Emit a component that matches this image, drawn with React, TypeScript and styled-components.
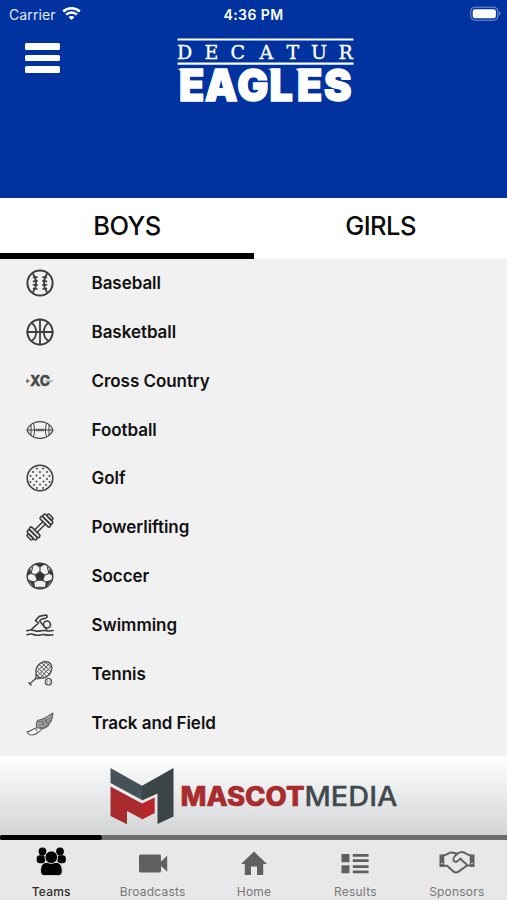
import React from "react";
import styled, { createGlobalStyle } from "styled-components";

const GlobalStyle = createGlobalStyle`
  *, *::before, *::after { box-sizing: border-box; }
  body { margin: 0; background: #f1f1f1; }
`;

const Screen = styled.div`
  width: 507px;
  height: 900px;
  display: flex;
  flex-direction: column;
  overflow: hidden;
  background: #f1f1f1;
  color: #111;
  font-family: Inter, "Liberation Sans", sans-serif;
`;

const Header = styled.header`
  height: 198px;
  flex: none;
  background: #0033a0;
  color: #fff;
`;

const StatusBar = styled.div`
  height: 28px;
  display: grid;
  grid-template-columns: 1fr 1fr 1fr;
  align-items: center;
  padding: 0 6px 0 9px;
`;

const Carrier = styled.div`
  display: flex;
  align-items: center;
  gap: 6px;
  color: #e4ebfb;
  font-size: 14px;
  letter-spacing: 0.1px;
`;

const Clock = styled.div`
  justify-self: center;
  margin-right: 3px;
  font-weight: 600;
  font-size: 14px;
  letter-spacing: 0.4px;
  white-space: nowrap;
`;

const Battery = styled.svg`
  justify-self: end;
  display: block;
`;

const TitleBar = styled.div`
  display: grid;
  grid-template-columns: 177px 1fr;
  padding-top: 8px;
`;

const MenuButton = styled.button`
  display: flex;
  flex-direction: column;
  gap: 5px;
  width: 35px;
  margin: 7px 0 0 25px;
  padding: 0;
  border: 0;
  background: none;
`;

const MenuLine = styled.span`
  height: 6.6px;
  border-radius: 1.5px;
  background: #fff;
`;

const Logo = styled.svg`
  display: block;
  overflow: visible;
`;

const Tabs = styled.div`
  display: grid;
  grid-template-columns: 254px 1fr;
  height: 61px;
  flex: none;
  background: #fff;
`;

const Tab = styled.button<{ $active?: boolean }>`
  border: 0;
  border-bottom: 6px solid ${(p) => (p.$active ? "#000" : "#fff")};
  padding: 0;
  background: #fff;
  color: #0a0a0a;
  font: 500 25.5px/55px Inter, sans-serif;
  letter-spacing: -0.55px;
`;

const TeamList = styled.ul`
  list-style: none;
  margin: 0;
  padding: 0;
  height: 497px;
  flex: none;
`;

const TeamRow = styled.li`
  height: 48.85px;
  display: flex;
  align-items: center;
  padding: 0 0 0.8px 25px;
  gap: 36.5px;
`;

const TeamIcon = styled.svg`
  width: 30px;
  height: 30px;
  flex: none;
  fill: none;
  stroke: #3d3d3d;
  stroke-width: 2;
  stroke-linecap: round;
  stroke-linejoin: round;
`;

const TeamName = styled.span`
  font-size: 17px;
  font-weight: 600;
  letter-spacing: -0.05px;
  white-space: nowrap;
`;

const Banner = styled.div`
  height: 79px;
  flex: none;
  padding: 11px 0 0 109px;
  background: linear-gradient(#fff, #d2d4d6);
`;

const Progress = styled.div`
  height: 5px;
  flex: none;
  background: #6c6c6c;
`;

const ProgressFill = styled.div`
  width: 102px;
  height: 5px;
  border-radius: 2.5px;
  background: #000;
`;

const NavBar = styled.nav`
  height: 60px;
  flex: none;
  display: grid;
  grid-template-columns: repeat(5, 1fr);
  background: #e8e8e8;
`;

const NavItem = styled.a<{ $active?: boolean }>`
  display: flex;
  flex-direction: column;
  align-items: center;
  padding: 5px 0 0 1px;
  color: ${(p) => (p.$active ? "#000" : "#606060")};
`;

const NavIcon = styled.svg`
  width: 36px;
  height: 34px;
  fill: currentColor;
`;

const NavLabel = styled.span<{ $active?: boolean }>`
  margin-top: 5px;
  font-size: 12px;
  line-height: 16px;
  letter-spacing: 0.2px;
  font-weight: ${(p) => (p.$active ? 500 : 400)};
  color: ${(p) => (p.$active ? "#2c2c2c" : "#777")};
`;

const golfDots = [
  [12, 5.5], [18, 5.5],
  [8, 9], [15, 9], [22, 9],
  [5.5, 13], [11.5, 12.5], [18.5, 12.5], [24.5, 13],
  [8, 16], [15, 15], [22, 16],
  [5.5, 19], [11.5, 18.5], [18.5, 18.5], [24.5, 19],
  [9, 22], [15, 21.5], [21, 22],
  [12, 25], [18, 25],
];

const Baseball = () => (
  <>
    <circle cx="15" cy="15" r="12.6" />
    <path d="M8 6c4 5 4 13 0 18M22 6c-4 5-4 13 0 18" strokeWidth="1.800" />
    <path
      d="M8.500 9.500l3.600-.5M8.500 13.300l3.600-.5M8.500 16.700l3.600.5M8.500 20.500l3.600.5M21.500 9.500l-3.600-.5M21.500 13.300l-3.600-.5M21.500 16.700l-3.600.5M21.500 20.500l-3.600.5"
      strokeWidth="1.700"
    />
  </>
);

const Basketball = () => (
  <>
    <circle cx="15" cy="15" r="12.6" />
    <path d="M15 2.4v25.2M2.4 15h25.2M6.5 6c6.2 4 6.2 14 0 18M23.5 6c-6.2 4-6.2 14 0 18" strokeWidth="1.8" />
  </>
);

const CrossCountry = () => (
  <>
    <text
      x="5" y="20.300" textLength="20" lengthAdjust="spacingAndGlyphs"
      fill="#484848" stroke="#484848" strokeWidth=".3" fontFamily="Inter, sans-serif" fontSize="14.500" fontWeight="800"
    >
      XC
    </text>
    <path d="M2 13.500l2.500 1.500-2.500 1.500zM21 15h6.500" fill="#666" stroke="#666" strokeWidth=".8" />
  </>
);

const Football = () => (
  <>
    <path d="M2 15C6 3.8 24 3.8 28 15C24 26.2 6 26.2 2 15z" strokeWidth="1.2" />
    <path d="M6 10v10M8.5 8.5c1.5 4 1.5 9 0 13M24 10v10M21.500 8.500c-1.500 4-1.500 9 0 13M3 15h24" strokeWidth="1" />
    <path d="M11 15h8M12 14v2M14 14v2M16 14v2M18 14v2" strokeWidth=".8" />
  </>
);

const Golf = () => (
  <>
    <circle cx="15" cy="15" r="12.8" strokeWidth="1.6" />
    {golfDots.map(([x, y]) => (
      <circle key={`${x}-${y}`} cx={x} cy={y} r=".95" fill="#3d3d3d" stroke="none" />
    ))}
  </>
);

const Powerlifting = () => (
  <g transform="rotate(-45 15 15)" strokeWidth="1.600">
    <path d="M9 13.300h12M9 16.700h12" />
    <rect x="5.700" y="8.300" width="3.500" height="13.400" rx="1.700" />
    <rect x="2.200" y="8.800" width="3.500" height="12.400" rx="1.700" />
    <rect x="-.600" y="11.500" width="2.800" height="7" rx="1.400" />
    <rect x="20.800" y="8.300" width="3.500" height="13.400" rx="1.700" />
    <rect x="24.300" y="8.800" width="3.500" height="12.400" rx="1.700" />
    <rect x="27.800" y="11.500" width="2.800" height="7" rx="1.400" />
  </g>
);

const Soccer = () => (
  <>
    <circle cx="15" cy="15" r="12.800" strokeWidth="1.400" />
    <g fill="#333" strokeWidth=".8">
      <path d="M15 10.600l4.700 3.400-1.800 5.400h-5.800L10.300 14z" />
      <path d="M10.600 3.300Q15 1 19.400 3.300L15 5.900z" />
      <path d="M25.600 8l2.200 6.500-3.800-2.200z" />
      <path d="M4.400 8L2.200 14.500 6 12.300z" />
      <path d="M25.300 20.500l-4.900 5.700.8-5z" />
      <path d="M4.700 20.500l4.900 5.700-.8-5z" />
    </g>
    <path d="M15 6v5M19.700 14l4.300-1.700M17.900 19.400l3.300 1.800M12.100 19.400l-3.300 1.800M10.300 14L6 12.300M6 12.300l1.600-6M24 12.300l-1.600-6M8.800 21.200l-5-2M21.200 21.200l5-2M11 26.300h8" strokeWidth="1.100" />
  </>
);

const Swimming = () => (
  <g strokeWidth="1.600">
    <circle cx="22" cy="14.500" r="3.500" />
    <path d="M6.500 19.300L13.500 13l-3-2.400 3.800-4.200 6.500-1.400c1.800 0 1.800 2.400.2 2.900l-4.600 1.300-1.800 1.800 7 8.300" />
    <path d="M2 20.800c4-2 6-.3 9 .3s5-.9 8-.6 5 1.200 9 .1M2 24.900c4-2 6-.3 9 .3s5-.9 8-.6 5 1.200 9 .1" />
  </g>
);

const Tennis = () => (
  <g stroke="#555">
    <g strokeWidth="1.500">
      <ellipse cx="18.800" cy="10.800" rx="7.200" ry="9" transform="rotate(40 18.800 10.800)" />
      <path d="M11.500 15.500l-1 4.200M15.500 19.300l-5 .400M10.500 19.700l-5.700 5M4 23.700l2 2.400" />
    </g>
    <path
      d="M13 9l9 8.500M14.500 6l9.500 9M17 4l8.500 8.500M12 12l8 7M21 3.500L12 13M24 5L13.500 16M25.500 8L16 18M21 3.500l5 5"
      strokeWidth="1"
    />
    <circle cx="23.500" cy="22.800" r="3.300" strokeWidth="1.100" />
    <path d="M22 20.500v4.600M25 20.500v4.600" strokeWidth=".7" />
  </g>
);

const Track = () => (
  <g stroke="#606060">
    <path
      d="M12 20.500c-1-2-.8-6 .5-8 5.500-.8 10-3.500 15.500-7.500-.5 6-2 9-4 11-1 3-4 4-6 4.500z"
      fill="#b0b0b0" strokeWidth="1.100"
    />
    <path d="M2 23.500c3 1 6-3 9-3.500 2-.3 5 0 6.500.5-1.500 2-3 3-4.500 4-3 2.500-7 3-9.500 1.500z" fill="#f5f5f5" strokeWidth="1.100" />
    <path d="M10.500 20.500l1.500 2.500M13 14c3 1 9-1.500 14-5M13 17c4 1 8-2 13-5M15 20c4 0 7-3 9-5M17 13l1 4M20 11l2 4" strokeWidth="1" />
  </g>
);

const teams = [
  { name: "Baseball", Icon: Baseball },
  { name: "Basketball", Icon: Basketball },
  { name: "Cross Country", Icon: CrossCountry },
  { name: "Football", Icon: Football },
  { name: "Golf", Icon: Golf },
  { name: "Powerlifting", Icon: Powerlifting },
  { name: "Soccer", Icon: Soccer },
  { name: "Swimming", Icon: Swimming },
  { name: "Tennis", Icon: Tennis },
  { name: "Track and Field", Icon: Track },
];

const TeamsGlyph = () => (
  <>
    <circle cx="9.500" cy="6.500" r="3.900" />
    <circle cx="27" cy="6.500" r="3.900" />
    <rect x="3.700" y="10.300" width="8.500" height="8" rx="3.200" />
    <rect x="24.300" y="10.300" width="8.500" height="8" rx="3.200" />
    <g stroke="#e8e8e8" strokeWidth=".9">
      <path d="M13 17.500h10.500c4 0 5.800 4.500 5.800 8.500 0 3-1.500 4.600-4 4.600H11.500c-2.500 0-4-1.600-4-4.600 0-4 1.500-8.500 5.500-8.500z" />
      <circle cx="18.300" cy="12.200" r="6.300" />
    </g>
  </>
);

const BroadcastGlyph = () => (
  <path d="M5.500 9.500H24.500q1.500 0 1.500 1.500v5.500l6.200-5.800v16l-6.200-5.700V26q0 1.500-1.500 1.500H5.500Q4 27.500 4 26V11q0-1.500 1.500-1.500z" />
);

const HomeGlyph = () => (
  <path d="M18 6.500l13 12.500h-3.800v11H21v-8.500h-6V30H8.800V19H5z" />
);

const ResultsGlyph = () => (
  <path d="M4.500 9h8v8.300h-8zM4.500 20.300h8v8h-8zM15.800 9h15.800v2.700H15.800zM15.800 14.200h15.800v2.700H15.800zM15.800 20.300h15.800V23H15.800zM15.800 25.600h15.800v2.700H15.800z" />
);

const SponsorsGlyph = () => (
  <>
    <path d="M.5 9.500h4.800v12.500H.5zM30.700 9.500h4.800v12.500h-4.800z" />
    <path
      d="M5 10.300c3 0 4.500-2.700 7.500-2.700 2 0 3.500.8 5 .8S21 7.100 23 7.100c3.500 0 5 3.200 8 3.200M5 20.800h3l6.500 5.800q2.500 1.800 5 0L28 20.500h3M19 8.300c-3 2-5.500 5.300-4.300 7.500 2.300 2.600 5-.7 6.800-2.200 2.500 3.500 5.500 4.700 6.500 6.500"
      fill="none" stroke="currentColor" strokeWidth="2" strokeLinejoin="round" strokeLinecap="round"
    />
    <circle cx="3" cy="18.500" r=".8" fill="#e8e8e8" />
    <circle cx="33" cy="18.500" r=".8" fill="#e8e8e8" />
  </>
);

const navItems = [
  { label: "Teams", Glyph: TeamsGlyph, active: true },
  { label: "Broadcasts", Glyph: BroadcastGlyph, active: false },
  { label: "Home", Glyph: HomeGlyph, active: false },
  { label: "Results", Glyph: ResultsGlyph, active: false },
  { label: "Sponsors", Glyph: SponsorsGlyph, active: false },
];

const WifiSignal = () => (
  <svg width="19" height="16" viewBox="0 1 19 16" fill="none" stroke="#fff" strokeWidth="2.500">
    <path d="M1.200 6.500c4.600-4.400 12-4.400 16.600 0M4.100 9.700c3-2.900 7.800-2.900 10.800 0" />
    <path d="M9.500 15l-3-3c1.700-1.500 4.300-1.500 6 0z" fill="#fff" stroke="none" />
  </svg>
);

const DecaturLogo = () => (
  <Logo width="178" height="68" viewBox="0 0 178 68" fill="#fff">
    <path d="M.5 2.500h176v2H.5zM.5 26.500h176v2.300H.5z" />
    <text
      x="0 27.500 53.500 82.500 109.500 134 161.500" y="23"
      fontFamily="'DejaVu Serif', serif" fontSize="19" stroke="#fff" strokeWidth=".35"
    >
      DECATUR
    </text>
    <text
      transform="scale(.95 1)" x="2.200 29.300 63.300 97.500 126.200 154.700" y="65.300"
      fontFamily="Inter, sans-serif" fontSize="43.500" fontWeight="900" stroke="#fff" strokeWidth="1.400"
    >
      EAGLES
    </text>
    <path d="M.8 32.700h6v5.500zM91.500 32.700h6v5.500zM118.500 32.700h6v5.500z" />
  </Logo>
);

const MascotLogo = () => (
  <Logo width="292" height="60" viewBox="0 0 292 60">
    <path d="M1.500 1L33 18.700V33L1.500 16z" fill="#46525a" />
    <path d="M33 18.700L64.500 1v48.500L48.500 57V26.500L33 33.500z" fill="#3b4548" />
    <path d="M1.500 19.500L33 36.500v15.500L18 44v13.300L1.500 49z" fill="#a92b2e" />
    <path d="M33 36.500l12.700-6V46L33 52.500z" fill="#b72529" />
    <text
      x="71.500" y="38.900" textLength="124" lengthAdjust="spacingAndGlyphs"
      fontFamily="Inter, sans-serif" fontSize="26.500" fontWeight="800" fill="#a82b2e" stroke="#a82b2e" strokeWidth=".6"
    >
      MASCOT
    </text>
    <text
      x="195.500" y="38.900" textLength="93" lengthAdjust="spacingAndGlyphs"
      fontFamily="Inter, sans-serif" fontSize="26.500" fontWeight="500" fill="#414a4d" stroke="#414a4d" strokeWidth=".3"
    >
      MEDIA
    </text>
  </Logo>
);

export default function App() {
  return (
    <>
      <GlobalStyle />
      <Screen>
        <Header>
          <StatusBar>
            <Carrier>
              Carrier
              <WifiSignal />
            </Carrier>
            <Clock>4:36 PM</Clock>
            <Battery width="31" height="16" viewBox="0 0 31 16">
              <rect x=".8" y="1.200" width="27" height="13" rx="4" fill="none" stroke="#7e97d0" strokeWidth="1" />
              <rect x="2.700" y="3.200" width="23.200" height="9" rx="2.200" fill="#fff" />
              <path d="M29.200 5.600c1.800.7 1.800 3.500 0 4.200z" fill="#7e97d0" />
            </Battery>
          </StatusBar>
          <TitleBar>
            <MenuButton aria-label="Menu">
              <MenuLine />
              <MenuLine />
              <MenuLine />
            </MenuButton>
            <DecaturLogo />
          </TitleBar>
        </Header>
        <Tabs>
          <Tab $active>BOYS</Tab>
          <Tab>GIRLS</Tab>
        </Tabs>
        <TeamList>
          {teams.map(({ name, Icon }) => (
            <TeamRow key={name}>
              <TeamIcon viewBox="0 0 30 30">
                <Icon />
              </TeamIcon>
              <TeamName>{name}</TeamName>
            </TeamRow>
          ))}
        </TeamList>
        <Banner>
          <MascotLogo />
        </Banner>
        <Progress>
          <ProgressFill />
        </Progress>
        <NavBar>
          {navItems.map(({ label, Glyph, active }) => (
            <NavItem key={label} $active={active}>
              <NavIcon viewBox="0 0 36 34">
                <Glyph />
              </NavIcon>
              <NavLabel $active={active}>{label}</NavLabel>
            </NavItem>
          ))}
        </NavBar>
      </Screen>
    </>
  );
}
